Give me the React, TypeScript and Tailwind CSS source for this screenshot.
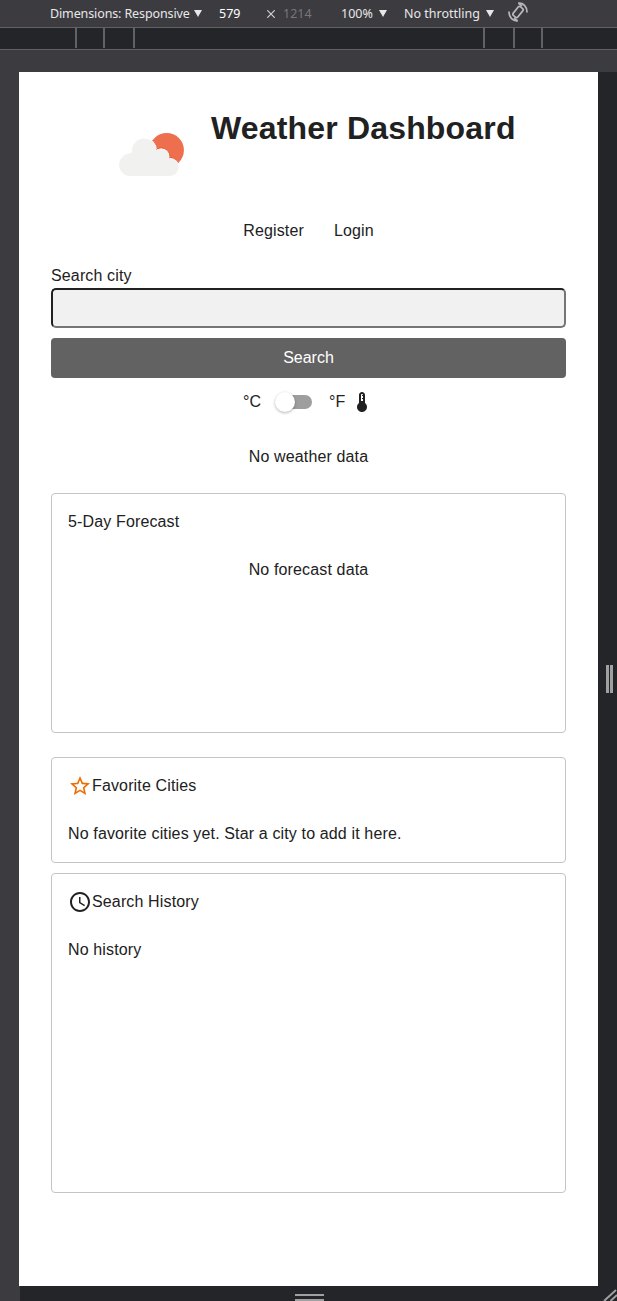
import React from "react";
import { MdStarBorder, MdAccessTime } from "react-icons/md";

function Caret({ className }: { className: string }) {
  return (
    <svg viewBox="0 0 8 7" className={`h-[7px] w-[8px] shrink-0 fill-[#e8e8ea] ${className}`}>
      <path d="M0 0h8L4 7z" />
    </svg>
  );
}

function DeviceBar() {
  return (
    <div className="flex h-[28px] items-center border-b border-[#626265] bg-[#3c3b3f] pl-[50px] font-['Noto_Sans','Open_Sans',sans-serif] text-[12.5px] leading-none whitespace-nowrap text-[#e8e8ea]">
      <span className="w-[140px] pt-px tracking-[-0.12px]">Dimensions: Responsive</span>
      <Caret className="ml-[4px]" />
      <span className="ml-[17px] w-[48px] pt-px text-white">579</span>
      <svg viewBox="0 0 8 8" className="h-[8px] w-[8px] shrink-0 stroke-[#cfcfd8]">
        <path d="M.3.3l7.4 7.4M7.7.3L.3 7.7" strokeWidth="1.2" />
      </svg>
      <span className="ml-[8px] w-[58px] pt-px text-[#77777a]">1214</span>
      <span className="w-[34px] pt-px">100%</span>
      <Caret className="ml-[4px]" />
      <span className="ml-[17px] w-[77px] pt-px">No throttling</span>
      <Caret className="ml-[5px]" />
      <svg viewBox="0 0 22 22" className="ml-[13px] -mt-[3px] h-[22px] w-[22px] shrink-0 fill-none stroke-[#b8b8bc]" strokeWidth="1.7">
        <rect x="8" y="5.4" width="6" height="11.2" rx="1.8" transform="rotate(38 11 11)" />
        <path d="M11.2 2.2c4.8-.6 9 3.2 8.8 9.3M11.4 2.2l3.6 2.9M10.8 19.8c-4.8.6-9-3.2-8.8-9.3M10.6 19.8L7 16.9" />
      </svg>
    </div>
  );
}

function Ruler() {
  return (
    <div className="flex h-[22px] justify-between border-b border-[#626265] bg-[#242529] pr-[74px] pl-[75px]">
      <div className="flex h-[20px]">
        <div className="w-[28px] border-l-2 border-[#626265]" />
        <div className="w-[32px] border-x-2 border-[#626265]" />
      </div>
      <div className="flex h-[20px]">
        <div className="w-[30px] border-l-2 border-[#626265]" />
        <div className="w-[30px] border-x-2 border-[#626265]" />
      </div>
    </div>
  );
}

function Logo() {
  return (
    <svg viewBox="0 0 66 44" className="mt-[25px] h-[44px] w-[66px] shrink-0">
      <defs>
        <clipPath id="sun">
          <circle cx="47.7" cy="17.2" r="17.2" />
        </clipPath>
      </defs>
      <g clipPath="url(#sun)">
        <rect width="66" height="44" fill="#ee6f4d" />
        <g fill="#fff" stroke="#e4552f" strokeWidth=".8">
          <circle cx="25.2" cy="17.7" r="13.3" />
          <circle cx="51" cy="34.6" r="9.9" />
          <circle cx="42.2" cy="23.6" r="8.7" />
        </g>
        <path d="M25 17H38L50 27V44H25Z" fill="#fff" />
      </g>
      <g fill="#f1f1ef">
        <circle cx="25.2" cy="17.9" r="12.3" />
        <circle cx="11.3" cy="31.8" r="11.2" />
        <circle cx="42" cy="23.6" r="7.9" />
        <circle cx="50.8" cy="34" r="9" />
        <path d="M11 20.6L25 12L36 20L48 25L51 34V43H11Z" />
      </g>
    </svg>
  );
}

function Thermometer() {
  return (
    <svg viewBox="0 0 24 24" className="h-[24px] w-[24px] shrink-0 fill-[#212121]">
      <path d="M15 13V5c0-1.66-1.34-3-3-3S9 3.34 9 5v8c-1.21.91-2 2.37-2 4 0 2.76 2.24 5 5 5s5-2.24 5-5c0-1.63-.79-3.09-2-4zm-4-8c0-.55.45-1 1-1s1 .45 1 1h-1v1h1v2h-1v1h1v2h-2V5z" />
    </svg>
  );
}

function Card({ className, icon, title, children }: { className: string; icon?: React.ReactNode; title: string; children: React.ReactNode }) {
  return (
    <section className={`rounded-[4px] border border-[#c4c4c4] p-4 ${className}`}>
      <h2 className="flex h-[24px] items-center">
        {icon}
        {title}
      </h2>
      <div className="mt-6">{children}</div>
    </section>
  );
}

function Dashboard() {
  return (
    <main className="h-[1214px] w-[579px] shrink-0 bg-white px-[32px] pt-[36px] font-['Liberation_Sans',Arial,sans-serif] text-[16px] leading-[24px] tracking-[0.14px] text-[#212121]">
      <header className="flex h-[98px] pl-[68px]">
        <Logo />
        <h1 className="ml-[26px] text-[32px] leading-[40px] font-bold whitespace-nowrap tracking-[0.17px]">Weather Dashboard</h1>
      </header>
      <nav className="mt-[13px] flex h-[24px] justify-center gap-[30px]">
        <a>Register</a>
        <a>Login</a>
      </nav>
      <form className="mt-[21px]">
        <label htmlFor="city" className="block h-[24px]">Search city</label>
        <input id="city" className="block h-[40px] w-full rounded-[5px] border-2 border-t-[#212121] border-r-[#767676] border-b-[#767676] border-l-[#212121] bg-[#f1f1f1] px-2" />
        <button type="button" className="mt-[10px] block h-[40px] w-full rounded-[4px] bg-[#626262] tracking-normal text-white">Search</button>
      </form>
      <div className="mt-[12px] flex h-[24px] items-center pl-[192px] tracking-normal">
        <span className="w-[33px]">°C</span>
        <div className="flex h-[14px] w-[36px] items-center rounded-full bg-[#9e9e9e]">
          <div className="-ml-px h-[20px] w-[20px] shrink-0 rounded-full bg-white shadow-[0_1px_3px_rgba(0,0,0,.3)]" />
        </div>
        <span className="ml-[17px] w-[21px]">°F</span>
        <Thermometer />
      </div>
      <p className="mt-[31px] text-center">No weather data</p>
      <Card className="mt-[24px] h-[240px]" title="5-Day Forecast">
        <p className="text-center">No forecast data</p>
      </Card>
      <Card className="mt-[24px] h-[106px]" title="Favorite Cities" icon={<MdStarBorder size={24} className="text-[#ed6c02]" />}>
        <p>No favorite cities yet. Star a city to add it here.</p>
      </Card>
      <Card className="mt-[10px] h-[320px]" title="Search History" icon={<MdAccessTime size={24} />}>
        <p>No history</p>
      </Card>
    </main>
  );
}

export default function App() {
  return (
    <div className="flex h-[1301px] w-[617px] flex-col overflow-hidden bg-[#3c3b3f]">
      <DeviceBar />
      <Ruler />
      <div className="mt-[22px] flex pl-[19px]">
        <Dashboard />
        <div className="flex w-[19px] items-center bg-[#242529] pl-[8px]">
          <div className="h-[28px] w-[7px] border-x-[3px] border-[#a0a0a0]" />
        </div>
      </div>
      <div className="ml-[20px] flex h-[15px] items-start bg-[#242529] pl-[275px]">
        <div className="mt-[8px] h-[7px] w-[29px] border-y-2 border-[#a0a0a0]" />
        <svg viewBox="0 0 14 12" className="mt-[3px] ml-auto h-[12px] w-[14px] fill-none stroke-[#a0a0a0]" strokeWidth="2">
          <path d="M1 12L13 1M7.5 12L14 6" />
        </svg>
      </div>
    </div>
  );
}
